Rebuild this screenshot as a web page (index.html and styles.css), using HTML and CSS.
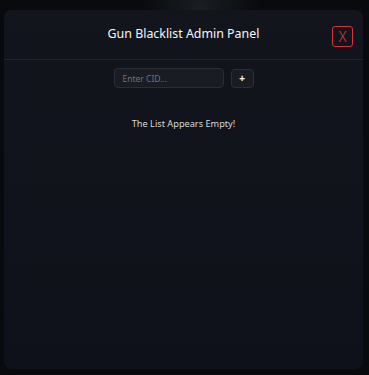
FILE: index.html
```html
<!DOCTYPE html>
<html>
<head>
<meta charset="utf-8">
<link rel="stylesheet" href="styles.css">
</head>
<body>
<div class="scene">
  <div class="panel">
    <div class="header">
      <h1 class="title">Gun Blacklist Admin Panel</h1>
      <button class="close">X</button>
    </div>
    <div class="body">
      <div class="add-row">
        <input class="cid-input" type="text" placeholder="Enter CID...">
        <button class="add-btn">+</button>
      </div>
      <p class="empty">The List Appears Empty!</p>
    </div>
  </div>
</div>
</body>
</html>
```
FILE: styles.css
```css
html, body {
  margin: 0;
  padding: 0;
  width: 369px;
  height: 375px;
  overflow: hidden;
  background: #080a0e;
  font-family: "Noto Sans", "Open Sans", sans-serif;
}
.scene {
  width: 369px;
  height: 375px;
  box-sizing: border-box;
  padding: 10px 6px 6px 4px;
  background:
    radial-gradient(circle at 200px 8px, #1a1d22 0, transparent 60px),
    #080a0d;
}
.panel {
  height: 359px;
  background: linear-gradient(#13151d, #0f111a);
  border-radius: 8px;
  display: flex;
  flex-direction: column;
}
.header {
  position: relative;
  height: 49px;
  border-bottom: 1px solid #20232b;
  display: flex;
  align-items: center;
  justify-content: center;
}
.title {
  margin: 0 0 2px;
  font-size: 12.4px;
  font-weight: 400;
  color: #f6f6f6;
}
.close {
  position: absolute;
  right: 10px;
  top: 16px;
  width: 21px;
  height: 21px;
  padding: 0;
  background: transparent;
  border: 1px solid #d8333a;
  border-radius: 3px;
  color: #e0353c;
  font-family: "Noto Sans", sans-serif;
  font-size: 14px;
  font-weight: 300;
  line-height: 19px;
}
.body {
  display: flex;
  flex-direction: column;
  align-items: center;
}
.add-row {
  display: flex;
  gap: 7px;
  margin-top: 8px;
}
.cid-input {
  width: 110px;
  height: 20px;
  box-sizing: border-box;
  background: #1a1c24;
  border: 1px solid #2a2d35;
  border-radius: 4px;
  padding: 0 8px;
  font-family: "Noto Sans", sans-serif;
  font-size: 8.5px;
  color: #ddd;
  outline: none;
}
.cid-input::placeholder {
  color: #6e717a;
}
.add-btn {
  width: 23px;
  height: 19px;
  margin-top: 1px;
  padding: 0;
  background: #1a1c24;
  border: 1px solid #2c2f37;
  border-radius: 4px;
  color: #ffffff;
  font-family: "Noto Sans", sans-serif;
  font-size: 10px;
  font-weight: 700;
  line-height: 17px;
}
.empty {
  margin: 29px 0 0;
  font-size: 9.2px;
  color: #d8d8d8;
}
```
